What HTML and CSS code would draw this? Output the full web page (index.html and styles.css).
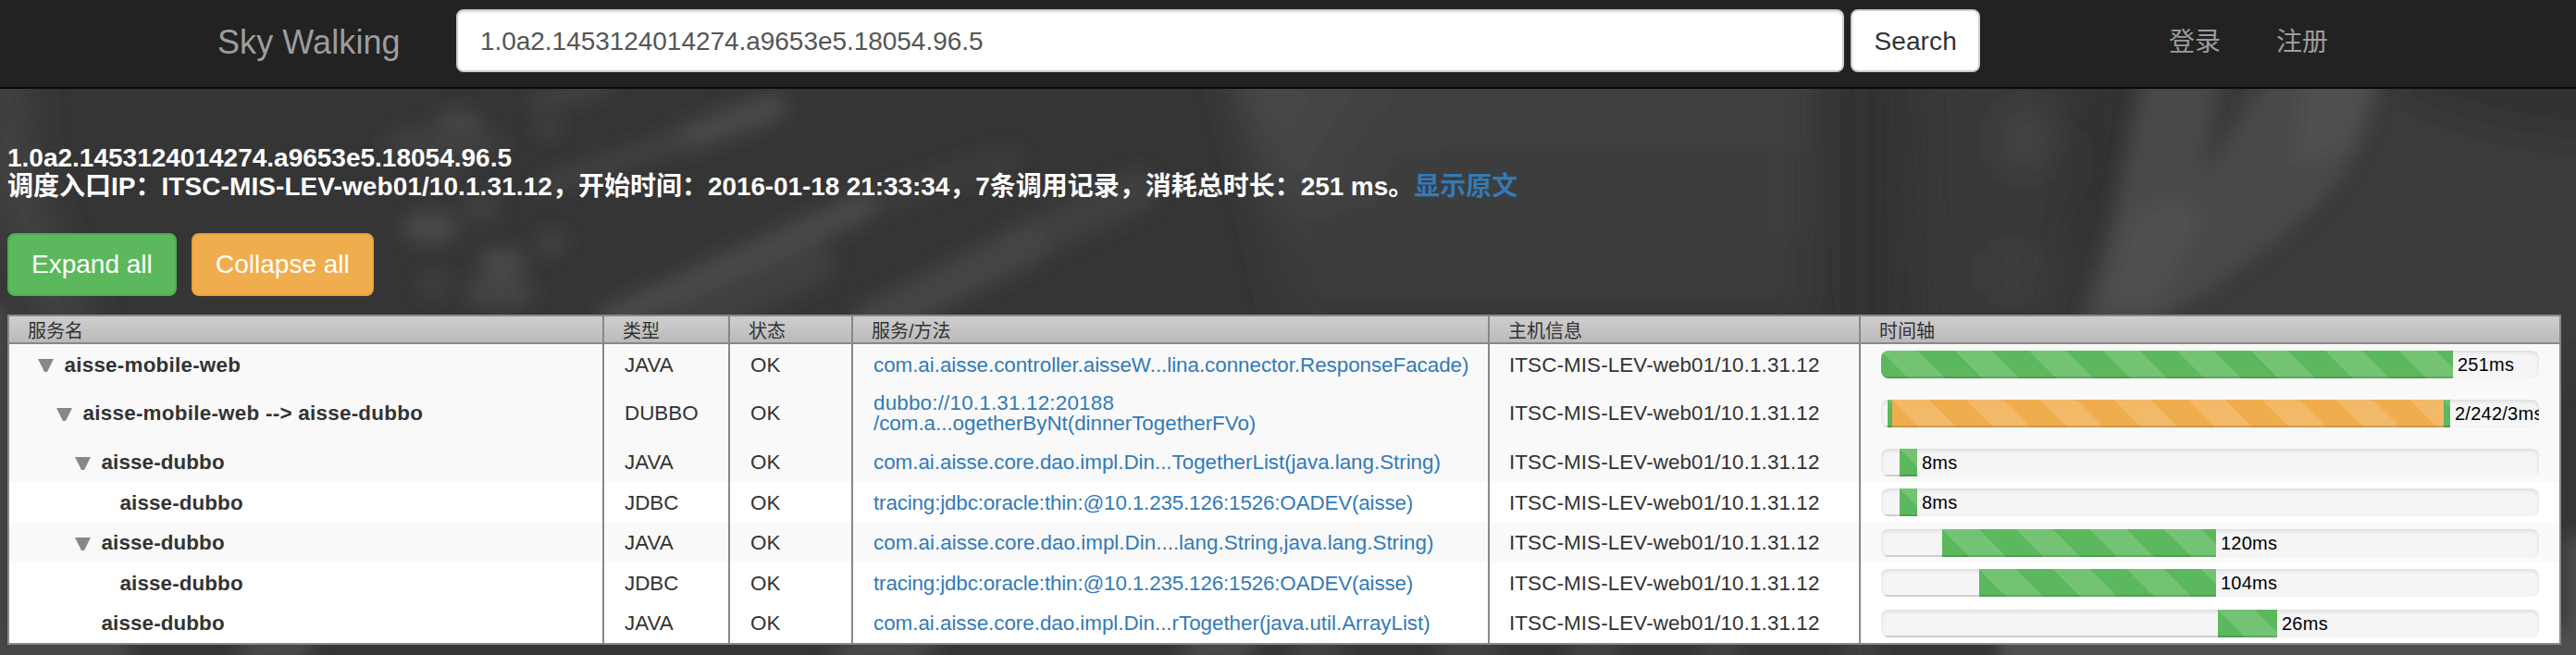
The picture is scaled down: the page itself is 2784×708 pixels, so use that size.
FILE: index.html
```html
<!DOCTYPE html>
<html lang="zh-CN">
<head>
<meta charset="utf-8">
<title>Sky Walking</title>
<link rel="stylesheet" href="styles.css">
</head>
<body>
<svg class="backdrop" width="2784" height="708" viewBox="0 0 2784 708" aria-hidden="true">
  <defs>
    <filter id="b8" x="-50%" y="-50%" width="200%" height="200%"><feGaussianBlur stdDeviation="10"/></filter>
    <filter id="b20" x="-50%" y="-50%" width="200%" height="200%"><feGaussianBlur stdDeviation="20"/></filter>
    <linearGradient id="mid" x1="0" y1="0" x2="0" y2="1">
      <stop offset="0" stop-color="#434343"/><stop offset=".35" stop-color="#3e3e3e"/><stop offset="1" stop-color="#383838"/>
    </linearGradient>
    <linearGradient id="glow" x1="0" y1="0" x2="1" y2="0">
      <stop offset="0" stop-color="#4d4d4d" stop-opacity=".7"/><stop offset="1" stop-color="#4d4d4d" stop-opacity="0"/>
    </linearGradient>
  </defs>
  <rect width="2784" height="708" fill="#353535"/>
  <g filter="url(#b20)">
    <path d="M1325 60H1960V380H1400L1370 250Z" fill="url(#mid)"/>
    <path d="M1325 60H1520L1500 230H1390Z" fill="url(#glow)"/>
    <path d="M1975 60H2050V400H1975Z" fill="#303030"/>
    <path d="M2070 60H2230V400H2080Z" fill="#383838"/>
    <ellipse cx="2190" cy="150" rx="26" ry="36" fill="#464646"/>
    <ellipse cx="2175" cy="294" rx="30" ry="26" fill="#414141"/>
    <path d="M2250 60H2310L2290 200L2240 300L2230 200Z" fill="#303030"/>
    <path d="M2400 60H2900V400H2330Z" fill="#3a3a3a"/>
    <path d="M2590 50H2900V160Q2680 150 2590 96Z" fill="#313131"/>
    <path d="M-20 60H30Q20 200 110 360H40Q0 220 -20 200Z" fill="#424242"/>
  </g>
  <g filter="url(#b8)">
    <path d="M2318 70H2400L2382 190L2460 70H2572Q2560 170 2500 225T2330 350H2250L2285 230Z" fill="#494949"/>
    <path d="M2300 240Q2350 190 2380 240L2330 330H2275Z" fill="#505050"/>
    <path d="M2490 70H2570L2540 160L2480 180Z" fill="#505050"/>
  </g>
  <g filter="url(#b8)" stroke="#4a4a4a" fill="none" stroke-linecap="round">
    <path d="M835 116L740 150" stroke-width="30"/>
    <path d="M740 150L590 200" stroke-width="20" stroke="#434343"/>
    <path d="M655 92L580 112" stroke-width="16" stroke="#444"/>
    <path d="M1090 170L925 226" stroke-width="24" stroke="#3e3e3e"/>
    <path d="M930 224L660 345" stroke-width="30"/>
    <path d="M1230 206L1100 265" stroke-width="44" stroke="#3f3f3f"/>
    <path d="M1110 265L940 350" stroke-width="44" stroke="#454545"/>
    <path d="M880 286L740 350" stroke-width="44" stroke="#404040"/>
  </g>
  <g filter="url(#b8)" fill="#4a4a4a">
    <ellipse cx="496" cy="131" rx="24" ry="11"/>
    <ellipse cx="592" cy="138" rx="14" ry="10" fill="#434343"/>
    <ellipse cx="480" cy="154" rx="66" ry="18" fill="#404040"/>
    <ellipse cx="480" cy="184" rx="26" ry="9" fill="#404040"/>
    <ellipse cx="465" cy="246" rx="30" ry="18"/>
    <ellipse cx="520" cy="225" rx="22" ry="12" fill="#424242"/>
    <ellipse cx="596" cy="262" rx="16" ry="12" fill="#444"/>
    <ellipse cx="543" cy="283" rx="26" ry="15"/>
    <ellipse cx="468" cy="307" rx="16" ry="14" fill="#404040"/>
    <ellipse cx="540" cy="315" rx="38" ry="18" fill="#454545"/>
  </g>
  <g filter="url(#b8)" fill="#484848">
    <path d="M-20 330H8V720H-20ZM0 690H140V720H0Z"/>
    <path d="M270 685H350L320 720H250ZM920 685H1020L990 720H890ZM1290 685H1370L1340 720H1270Z"/>
    <path d="M1400 690H1450V720H1390ZM1560 690H1620V720H1550ZM1700 690H1750V720H1690ZM1840 690H1880V720H1840ZM1990 690H2030V720H1990Z" fill="#434343"/>
    <path d="M2160 680H2800V740H2160ZM2772 580H2800V720H2772Z" fill="#4f4f4f"/>
  </g>
</svg>

<nav class="navbar">
  <a class="brand">Sky Walking</a>
  <form class="search">
    <div class="search-input">1.0a2.1453124014274.a9653e5.18054.96.5</div>
    <div class="search-button">Search</div>
  </form>
  <div class="nav-links"><a>登录</a><a>注册</a></div>
</nav>

<main class="content">
  <h5 class="summary"><span class="trace-id">1.0a2.1453124014274.a9653e5.18054.96.5</span><br>调度入口IP：<span class="host">ITSC-MIS-LEV-web01/10.1.31.12</span>，开始时间：<span class="when">2016-01-18 21:33:34</span>，7条调用记录，消耗总时长：<span class="when">251 ms</span>。<a>显示原文</a></h5>
  <div class="actions">
    <div class="btn btn-success">Expand all</div>
    <div class="btn btn-warning">Collapse all</div>
  </div>

  <div class="tree">
    <div class="row head">
      <div>服务名</div><div>类型</div><div>状态</div><div>服务/方法</div><div>主机信息</div><div>时间轴</div>
    </div>

    <div class="row odd">
      <div class="name l1"><svg class="arrow" viewBox="0 0 17 14"><path d="M0 0H17L10 14H7Z"/></svg>aisse-mobile-web</div>
      <div>JAVA</div><div>OK</div>
      <div class="link w1">com.ai.aisse.controller.aisseW...lina.connector.ResponseFacade)</div>
      <div class="hostcell">ITSC-MIS-LEV-web01/10.1.31.12</div>
      <div class="time"><div class="progress"><i class="bar ok" style="width:618px"></i><span>251ms</span></div></div>
    </div>

    <div class="row odd tall">
      <div class="name l2"><svg class="arrow" viewBox="0 0 17 14"><path d="M0 0H17L10 14H7Z"/></svg>aisse-mobile-web --&gt; aisse-dubbo</div>
      <div>DUBBO</div><div>OK</div>
      <div class="link"><p><span class="w2">dubbo://10.1.31.12:20188</span><br>/com.a...ogetherByNt(dinnerTogetherFVo)</p></div>
      <div class="hostcell">ITSC-MIS-LEV-web01/10.1.31.12</div>
      <div class="time"><div class="progress"><i class="bar" style="width:7px"></i><i class="bar ok" style="width:5px"></i><i class="bar warn" style="width:596px"></i><i class="bar ok" style="width:7px"></i><span>2/242/3ms</span></div></div>
    </div>

    <div class="row odd">
      <div class="name l3"><svg class="arrow" viewBox="0 0 17 14"><path d="M0 0H17L10 14H7Z"/></svg>aisse-dubbo</div>
      <div>JAVA</div><div>OK</div>
      <div class="link">com.ai.aisse.core.dao.impl.Din...TogetherList(java.lang.String)</div>
      <div class="hostcell">ITSC-MIS-LEV-web01/10.1.31.12</div>
      <div class="time"><div class="progress"><i class="bar" style="width:20px"></i><i class="bar ok" style="width:19px"></i><span>8ms</span></div></div>
    </div>

    <div class="row">
      <div class="name l4">aisse-dubbo</div>
      <div>JDBC</div><div>OK</div>
      <div class="link w4">tracing:jdbc:oracle:thin:@10.1.235.126:1526:OADEV(aisse)</div>
      <div class="hostcell">ITSC-MIS-LEV-web01/10.1.31.12</div>
      <div class="time"><div class="progress"><i class="bar" style="width:20px"></i><i class="bar ok" style="width:19px"></i><span>8ms</span></div></div>
    </div>

    <div class="row odd">
      <div class="name l3"><svg class="arrow" viewBox="0 0 17 14"><path d="M0 0H17L10 14H7Z"/></svg>aisse-dubbo</div>
      <div>JAVA</div><div>OK</div>
      <div class="link w5">com.ai.aisse.core.dao.impl.Din....lang.String,java.lang.String)</div>
      <div class="hostcell">ITSC-MIS-LEV-web01/10.1.31.12</div>
      <div class="time"><div class="progress"><i class="bar" style="width:66px"></i><i class="bar ok" style="width:296px"></i><span>120ms</span></div></div>
    </div>

    <div class="row">
      <div class="name l4">aisse-dubbo</div>
      <div>JDBC</div><div>OK</div>
      <div class="link w4">tracing:jdbc:oracle:thin:@10.1.235.126:1526:OADEV(aisse)</div>
      <div class="hostcell">ITSC-MIS-LEV-web01/10.1.31.12</div>
      <div class="time"><div class="progress"><i class="bar" style="width:106px"></i><i class="bar ok" style="width:256px"></i><span>104ms</span></div></div>
    </div>

    <div class="row">
      <div class="name l3 leaf">aisse-dubbo</div>
      <div>JAVA</div><div>OK</div>
      <div class="link">com.ai.aisse.core.dao.impl.Din...rTogether(java.util.ArrayList)</div>
      <div class="hostcell">ITSC-MIS-LEV-web01/10.1.31.12</div>
      <div class="time"><div class="progress"><i class="bar" style="width:364px"></i><i class="bar ok" style="width:64px"></i><span>26ms</span></div></div>
    </div>
  </div>
</main>
</body>
</html>
```
FILE: styles.css
```css
* { box-sizing: border-box; }
body {
  margin: 0;
  width: 2784px;
  height: 708px;
  overflow: hidden;
  background: #353535;
  color: #333;
  font: 28px/40px "Liberation Sans", "Noto Sans CJK SC", sans-serif;
}
/* decorative background picture, under the whole page */
.backdrop { position: absolute; top: 0; left: 0; z-index: -1; }

.navbar {
  display: flex;
  align-items: flex-start;
  height: 96px;
  padding: 10px 0 0 235px;
  background: #222;
  border-bottom: 2px solid #080808;
}
.brand {
  width: 258px;
  padding-top: 16px;
  font-size: 36px;
  color: #9d9d9d;
  letter-spacing: .09px;
}
.search { display: flex; gap: 7px; margin: 0; }
.search-input, .search-button {
  height: 68px;
  border: 2px solid #ccc;
  border-radius: 8px;
  background: #fff;
  padding: 13px 24px;
}
.search-input {
  width: 1500px;
  color: #555;
  box-shadow: inset 0 2px 2px rgba(0, 0, 0, .075);
  letter-spacing: -.04px;
}
.search-button { width: 140px; padding: 13px 23.5px; letter-spacing: .1px; }
.nav-links {
  display: flex;
  gap: 60px;
  padding: 16px 0 0 204px;
  color: #9d9d9d;
}

.content { padding: 59px 16px 0 8px; }
.summary {
  margin: 0;
  height: 97px;
  font-size: 28px;
  line-height: 31px;
  font-weight: bold;
  color: #fff;
  white-space: nowrap;
}
.summary .host { letter-spacing: .08px; }
.summary .when { letter-spacing: -.1px; }
.summary a { color: #337ab7; }

.actions { display: flex; gap: 16px; height: 88px; }
.btn {
  height: 68px;
  padding: 12px 24px;
  border: 2px solid;
  border-radius: 8px;
  color: #fff;
  white-space: nowrap;
}
.btn-success { width: 183px; background: #5cb85c; border-color: #4cae4c; }
.btn-warning { width: 197px; background: #f0ad4e; border-color: #eea236; }

.tree {
  border: 2px solid #888;
  background: #fff;
  font-size: 22.4px;
  line-height: 22px;
}
.row {
  display: grid;
  grid-template-columns: 643px 136px 133px 688px 401px 1fr;
  height: 43.5px;
}
.row > div {
  padding: 11.5px 0 0 22px;
  border-right: 2px solid #888;
  white-space: nowrap;
}
.row > div:last-child { border-right: 0; }
.odd { background: #f9f9f9; }
.tall { height: 62px; }
.tall > div { padding-top: 20.5px; }
.head {
  height: 30px;
  border-bottom: 2px solid #888;
  background: linear-gradient(#cecece, #bababa);
  font-size: 20px;
  line-height: 28px;
}
.row.head > div { padding: 2px 0 0 20px; }

.row > .name {
  display: flex;
  align-items: flex-start;
  font-weight: bold;
  letter-spacing: .12px;
}
.arrow { width: 17px; height: 14px; margin: 4.5px 12px 0 0; fill: #888; flex: none; }
.row > .l1 { padding-left: 30.5px; letter-spacing: .25px; }
.row > .l2 { padding-left: 50.5px; letter-spacing: .27px; }
.row > .l3 { padding-left: 70.5px; }
.row > .l4 { padding-left: 119.5px; }
.row > .l3.leaf { padding-left: 99.5px; }

.link { color: #337ab7; letter-spacing: -.03px; }
.row.tall > .link { padding-top: 9.5px; }
.link p { margin: 0; }
.w1 { letter-spacing: -.04px; }
.w2 { letter-spacing: .2px; }
.w4 { letter-spacing: -.15px; }
.w5 { letter-spacing: .01px; }
.row > .hostcell { padding-left: 21px; letter-spacing: .11px; }

.row > .time { padding: 7px 24px 0 22px; }
.row.tall > .time { padding-top: 16px; }
.progress {
  display: flex;
  width: 711px;
  height: 30px;
  overflow: hidden;
  border-radius: 8px;
  background: #f5f5f5;
  box-shadow: inset 0 2px 4px rgba(0, 0, 0, .1);
}
.bar {
  flex: none;
  box-shadow: inset 0 -2px 0 rgba(0, 0, 0, .15);
}
.ok, .warn {
  background-color: #5cb85c;
  background-image: linear-gradient(45deg, rgba(255, 255, 255, .15) 25%, transparent 25%, transparent 50%, rgba(255, 255, 255, .15) 50%, rgba(255, 255, 255, .15) 75%, transparent 75%, transparent);
  background-size: 80px 80px;
}
.warn { background-color: #f0ad4e; }
.progress span {
  padding-left: 5px;
  font-size: 20px;
  line-height: 30px;
  color: #000;
  letter-spacing: .25px;
}
```
